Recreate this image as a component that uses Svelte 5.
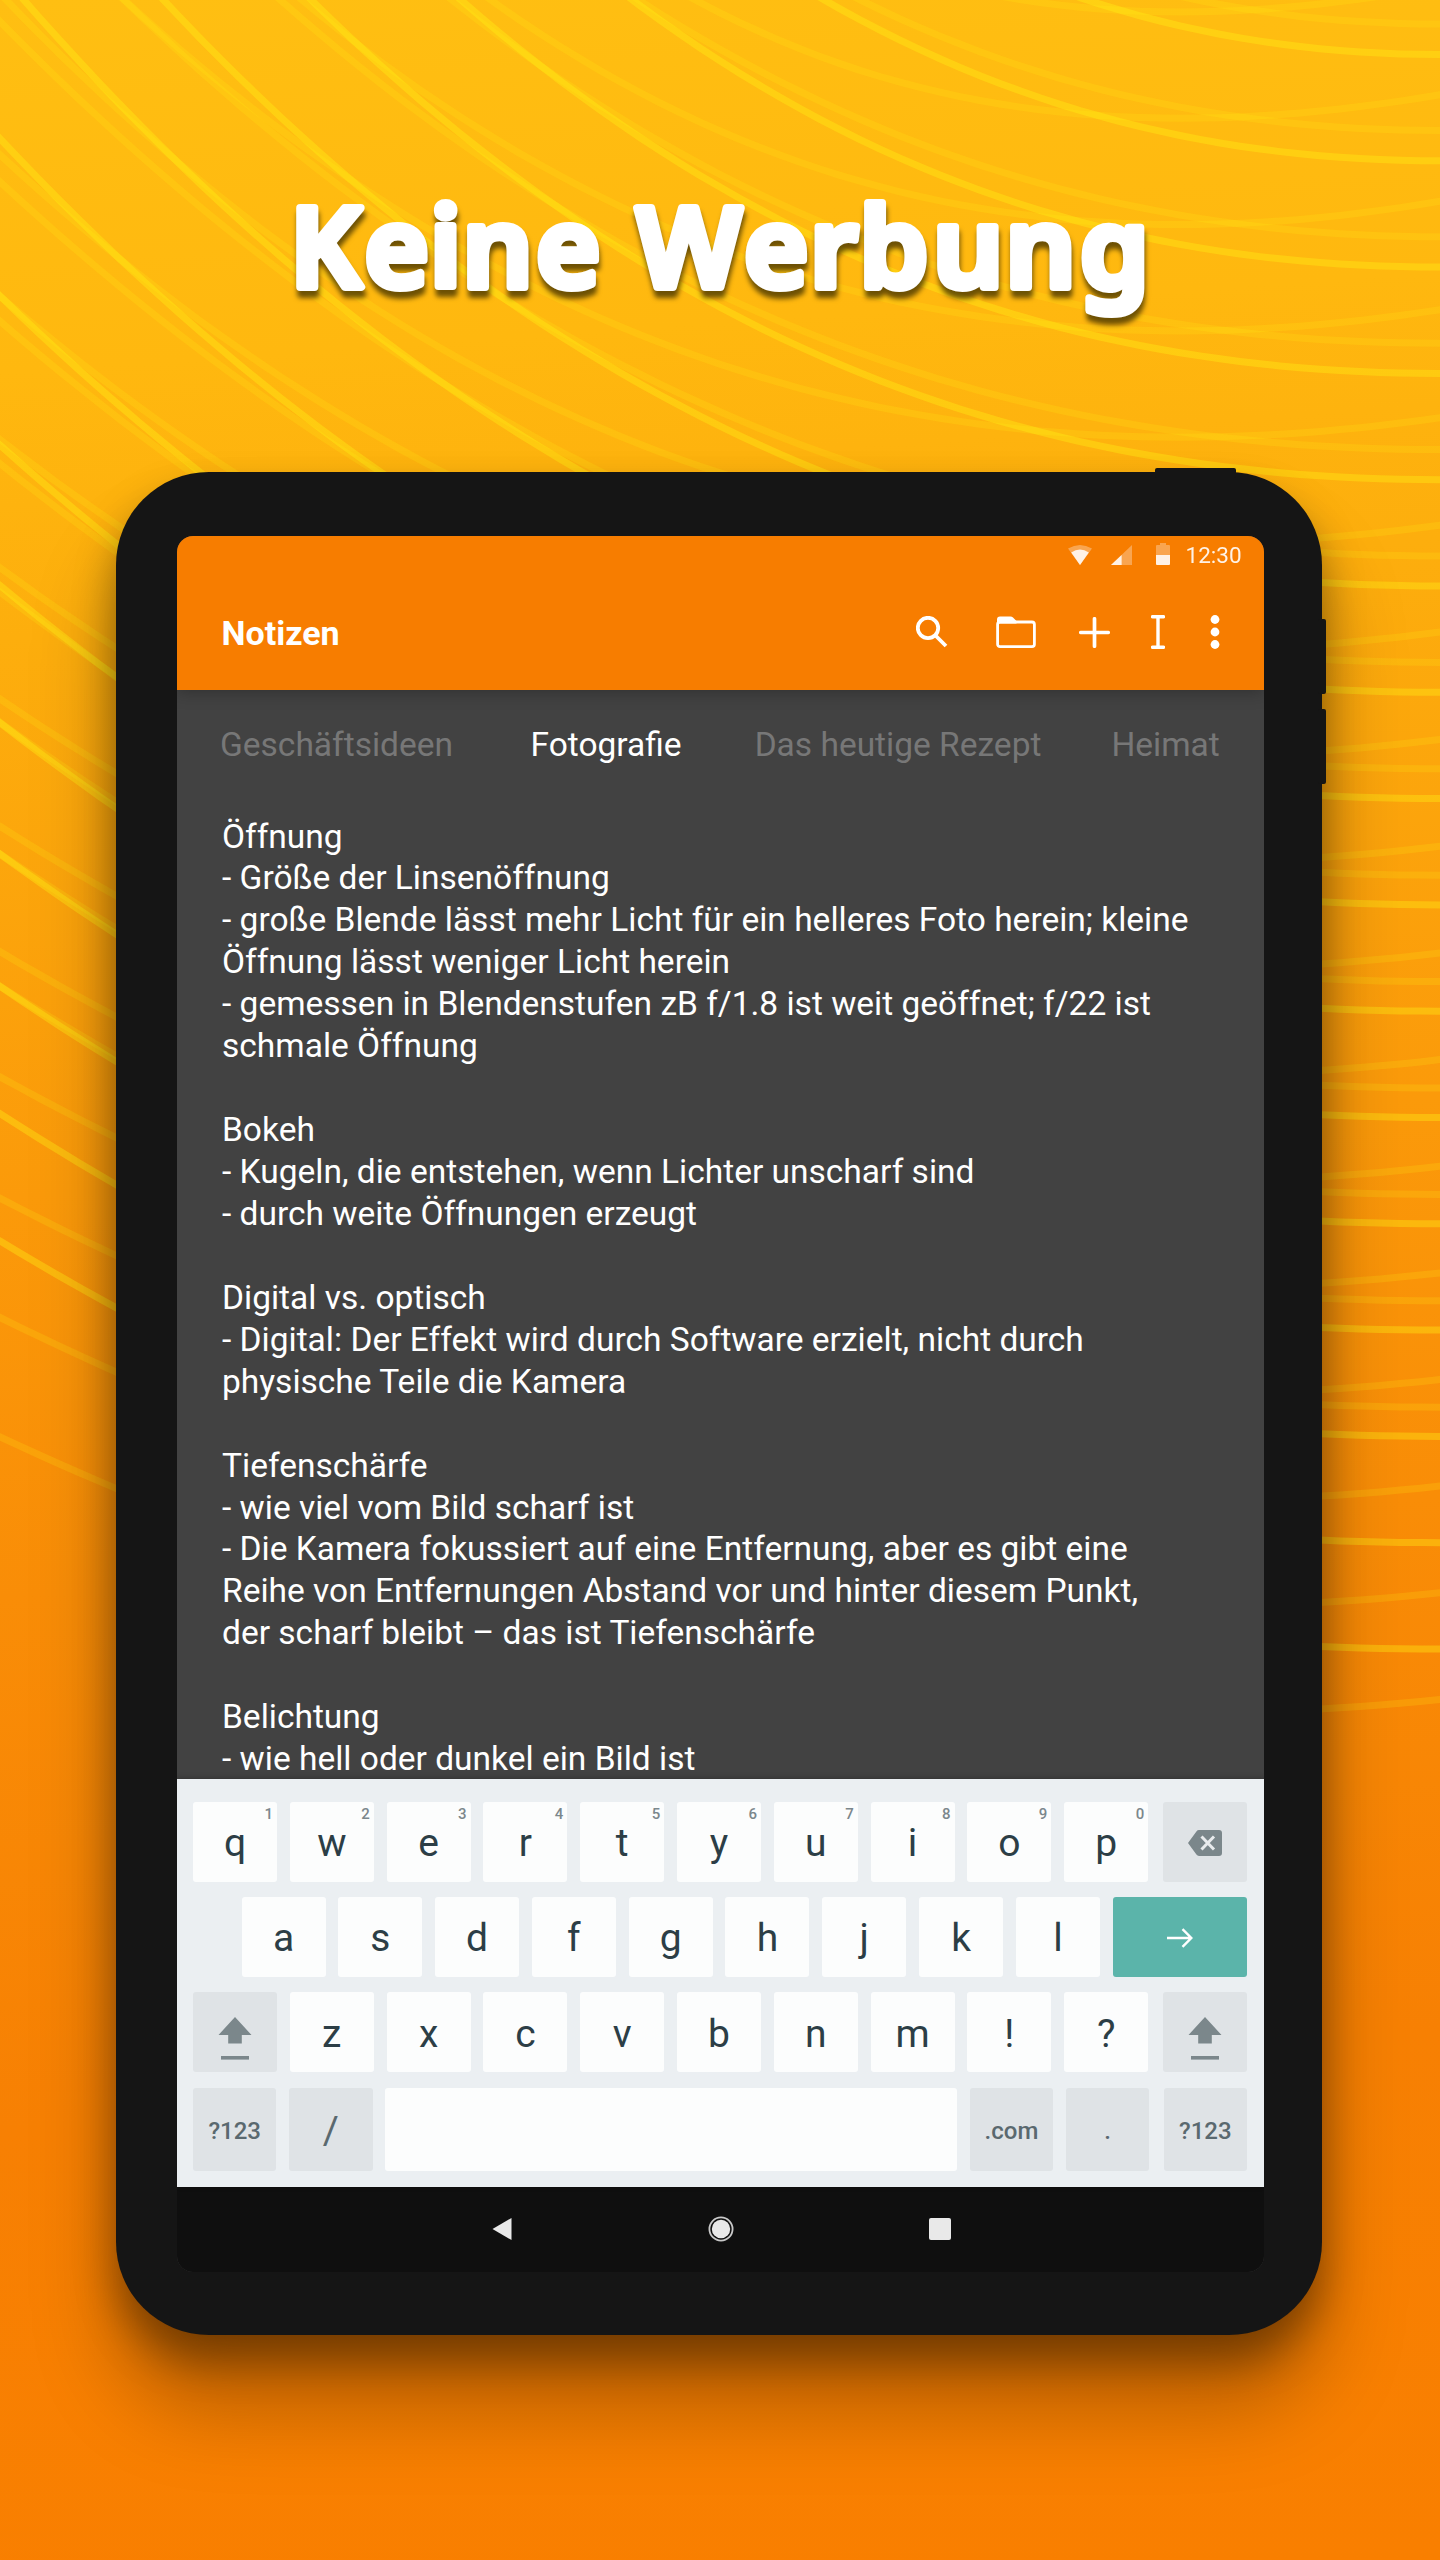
<script>
  // Each wave is y = base - a*u^2 - b*u^3, with u growing from `origin` to the left edge.
  const families = [
    {
      kind: 'strong', origin: 1440, first: 54.5, step: 106.3,
      shape: [[800, 440], [700, 420], [625, 400], [570, 350], [530, 320], [502, 275], [475, 245], [445, 215],
        [426, 183], [408, 158], [398, 134], [388, 113], [380, 96], [370, 80], [362, 67], [354, 54]]
    },
    {
      kind: 'soft', origin: 1440, first: 24, step: 106.4,
      shape: [[760, 500], [640, 410], [620, 260], [530, 290], [500, 240], [470, 214], [450, 191], [425, 162],
        [415, 139], [400, 118], [391, 105], [380, 92], [370, 77], [357, 64]]
    },
    {
      kind: 'soft', origin: 1180, first: 12, step: 106.3,
      shape: [[620, 420], [560, 344], [530, 220], [475, 165], [430, 130], [410, 140], [390, 105], [365, 95],
        [350, 73], [337, 64], [327, 49], [317, 38], [308, 28], [299, 18], [292, 10], [284, 5], [276, 0]]
    }
  ];

  const waves = families.flatMap(({ kind, origin, first, step, shape }) =>
    shape.map(([a, b], i) => {
      const points = [];
      for (let x = -20; x <= 1460; x += 20) {
        const u = (origin - x) / origin;
        points.push(`${x} ${(first + step * i - a * u * u - b * u * u * u).toFixed(1)}`);
      }
      return { kind, d: 'M' + points.join('L') };
    })
  );

  const tabs = [
    { label: 'Geschäftsideen' },
    { label: 'Fotografie', active: true },
    { label: 'Das heutige Rezept' },
    { label: 'Heimat' }
  ];

  const note = `Öffnung
- Größe der Linsenöffnung
- große Blende lässt mehr Licht für ein helleres Foto herein; kleine
Öffnung lässt weniger Licht herein
- gemessen in Blendenstufen zB f/1.8 ist weit geöffnet; f/22 ist
schmale Öffnung

Bokeh
- Kugeln, die entstehen, wenn Lichter unscharf sind
- durch weite Öffnungen erzeugt

Digital vs. optisch
- Digital: Der Effekt wird durch Software erzielt, nicht durch
physische Teile die Kamera

Tiefenschärfe
- wie viel vom Bild scharf ist
- Die Kamera fokussiert auf eine Entfernung, aber es gibt eine
Reihe von Entfernungen Abstand vor und hinter diesem Punkt,
der scharf bleibt – das ist Tiefenschärfe

Belichtung
- wie hell oder dunkel ein Bild ist`;

  const topRow = [...'qwertyuiop'];
  const homeRow = [...'asdfghjkl'];
  const lowRow = [...'zxcvbnm!?'];
</script>

{#snippet shift()}
  <div class="key mod">
    <svg class="shift" viewBox="0 0 34 44"><path d="M17 0L33.5 18H23.8V26.5H10.2V18H.5Z" /><path d="M3 39h28v3.6H3z" /></svg>
  </div>
{/snippet}

<main class="poster">
  <svg class="waves" viewBox="0 0 1440 2560" aria-hidden="true">
    {#each waves as wave}
      <path class={wave.kind} d={wave.d} />
    {/each}
  </svg>

  <svg class="headline" viewBox="0 0 1440 472" role="heading" aria-level="1">
    <text x="290 364.5 430 462.5 536 598 636.5 744 810 859.5 933 1005.5 1080" y="286.5">Keine Werbung</text>
  </svg>

  <section class="tablet">
    <i class="button power"></i>
    <i class="button volume-up"></i>
    <i class="button volume-down"></i>

    <div class="screen">
      <header>
        <div class="status">
          <svg class="wifi" viewBox="0 0 24 20"><path class="dim" d="M0 3.6Q12 -3.6 24 3.6L12 20Z" /><path d="M3.2 7.6Q12 1.6 20.8 7.6L12 20Z" /></svg>
          <svg class="signal" viewBox="0 0 21 20"><path class="dim" d="M21 0V20H0Z" /><path d="M10.6 9.9V20H0Z" /></svg>
          <svg class="battery" viewBox="0 0 14 22"><path class="dim" d="M4 0h6v2h3q1 0 1 1v9H0V3q0-1 1-1h3z" /><path d="M0 12h14v9q0 1-1 1H1q-1 0-1-1z" /></svg>
          <span>12:30</span>
        </div>
        <div class="toolbar">
          <h2>Notizen</h2>
          <svg class="search" viewBox="0 0 32 32"><circle cx="12" cy="12" r="10.2" /><path d="M19.5 19.5L30 30" /></svg>
          <svg class="folder" viewBox="0 0 40 32"><path class="solid" d="M1 8V3.5Q1 .5 4 .5H14.5Q16 .5 17 1.5L20.5 5V7.5H1Z" /><rect x="1.6" y="6" width="36.8" height="24.6" rx="2.4" /></svg>
          <svg class="plus" viewBox="0 0 31 31"><path d="M15.5 1.8V29.2M1.8 15.5H29.2" /></svg>
          <svg class="cursor" viewBox="0 0 14 34"><path d="M1.5 1.8H12.5M1.5 32.2H12.5M7 2V32" /></svg>
          <svg class="more" viewBox="0 0 10 34"><circle cx="5" cy="4.5" r="4.4" /><circle cx="5" cy="17" r="4.4" /><circle cx="5" cy="29.5" r="4.4" /></svg>
        </div>
      </header>

      <div class="body">
        <nav class="tabs">
          {#each tabs as tab}
            <span class:active={tab.active}>{tab.label}</span>
          {/each}
        </nav>
        <p class="note">{note}</p>
      </div>

      <div class="keyboard">
        <div class="row">
          {#each topRow as letter, i}
            <div class="key"><small>{(i + 1) % 10}</small><b>{letter}</b></div>
          {/each}
          <div class="key mod">
            <svg class="erase" viewBox="0 0 34 26"><path d="M11 0H31Q34 0 34 3V23Q34 26 31 26H11Q9.4 26 8.4 24.6L0 13L8.4 1.4Q9.4 0 11 0Z" /><path class="cross" d="M13.5 6.5L26 19.5M26 6.5L13.5 19.5" /></svg>
          </div>
        </div>
        <div class="row home">
          {#each homeRow as letter}
            <div class="key"><b>{letter}</b></div>
          {/each}
          <div class="key enter">
            <svg viewBox="0 0 26 20"><path d="M0 10H24M15.5 1.2L24.3 10L15.5 18.8" /></svg>
          </div>
        </div>
        <div class="row">
          {@render shift()}
          {#each lowRow as letter}
            <div class="key"><b>{letter}</b></div>
          {/each}
          {@render shift()}
        </div>
        <div class="row last">
          <div class="key mod"><em>?123</em></div>
          <div class="key mod"><b>/</b></div>
          <div class="key space"></div>
          <div class="key mod"><em>.com</em></div>
          <div class="key mod"><em>.</em></div>
          <div class="key mod"><em>?123</em></div>
        </div>
      </div>

      <footer>
        <svg class="back" viewBox="0 0 20 22"><path d="M19.5 0V22L.5 11Z" /></svg>
        <svg class="circle" viewBox="0 0 26 26"><circle class="ring" cx="13" cy="13" r="11.6" /><circle cx="13" cy="13" r="9.2" /></svg>
        <svg class="square" viewBox="0 0 22 22"><rect width="22" height="22" rx="2" /></svg>
      </footer>
    </div>
  </section>
</main>

<style>
  :global(body) {
    margin: 0;
  }

  .poster {
    position: relative;
    width: 1440px;
    height: 2560px;
    overflow: hidden;
    font-family: Roboto, 'Liberation Sans', sans-serif;
    background: linear-gradient(176deg, #ffbf12 0%, #ffb80f 14%, #fdae0d 24%, #fb9a0a 45%, #f98d07 60%, #f78003 80%, #f97f00 100%);
  }

  svg {
    display: block;
    flex: none;
  }

  .waves {
    position: absolute;
    inset: 0;
    width: 1440px;
    height: 2560px;
    fill: none;
    stroke: #fff016;
    stroke-width: 7;
  }
  .strong { opacity: 0.38; }
  .soft { opacity: 0.19; }

  .headline {
    position: relative;
    width: 1440px;
    height: 472px;
    font: 600 110px 'Noto Sans', 'Open Sans', sans-serif;
    fill: #fff;
    stroke: #fff;
    stroke-width: 8;
    stroke-linejoin: round;
    filter: drop-shadow(1px 7px 2.5px rgba(60, 45, 0, 0.75));
  }

  .tablet {
    position: relative;
    box-sizing: border-box;
    width: 1206px;
    height: 1863px;
    margin-left: 116px;
    padding: 64px 58.5px 63px 61px;
    border-radius: 93px;
    background: #151515;
    box-shadow: 0 72px 84px rgba(0, 0, 0, 0.28), 0 24px 40px rgba(0, 0, 0, 0.36);
  }

  .button {
    position: absolute;
    background: #151515;
    border-radius: 2px;
  }
  .power { left: 1039px; top: -4px; width: 81px; height: 10px; }
  .volume-up { right: -3.5px; top: 147px; width: 8px; height: 75px; }
  .volume-down { right: -3.5px; top: 237px; width: 8px; height: 75px; }

  .screen {
    display: flex;
    flex-direction: column;
    height: 1736px;
    border-radius: 16px;
    overflow: hidden;
    background: #424242;
  }

  header {
    position: relative;
    height: 153.5px;
    flex: none;
    background: #f77d00;
    color: #fff;
    box-shadow: 0 2px 16px rgba(0, 0, 0, 0.28);
  }

  .status {
    display: flex;
    align-items: flex-end;
    justify-content: flex-end;
    height: 29px;
    padding-right: 22px;
    fill: #fff;
    opacity: 0.9;
  }
  .status .dim { opacity: 0.35; }
  .status span { font-size: 22.5px; line-height: 20px; width: 56px; margin-left: 16px; }
  .wifi { width: 24px; height: 20px; }
  .signal { width: 21px; height: 20px; margin-left: 19px; }
  .battery { width: 14px; height: 22px; margin-left: 24px; }

  .toolbar {
    display: flex;
    align-items: center;
    height: 68px;
    margin-top: 33px;
    padding: 0 43.5px 0 44.5px;
    fill: none;
    stroke: #fff;
  }
  .toolbar h2 { flex: 1; margin: 0; padding-top: 1px; font-size: 34px; font-weight: 700; line-height: 40px; }
  .search { width: 32px; height: 32px; stroke-width: 3.8; }
  .folder { width: 40px; height: 32px; margin-left: 48px; stroke-width: 2.8; }
  .folder .solid { fill: #fff; stroke: none; }
  .plus { width: 31px; height: 31px; margin-left: 43px; stroke-width: 3.7; stroke-linecap: round; }
  .cursor { width: 14px; height: 34px; margin-left: 41px; stroke-width: 3.4; stroke-linecap: round; }
  .more { width: 10px; height: 34px; margin-left: 45px; fill: #fff; stroke: none; }

  .body {
    height: 1089.5px;
    flex: none;
    overflow: hidden;
    color: #fff;
    font-size: 33.5px;
  }

  .tabs {
    display: flex;
    margin: 35px 0 0 43px;
    line-height: 40px;
    color: #777;
    white-space: nowrap;
  }
  .tabs span:nth-child(2) { margin-left: 77.5px; }
  .tabs span:nth-child(3) { margin-left: 73px; }
  .tabs span:nth-child(4) { margin-left: 70px; }
  .tabs .active { color: #fff; }

  .note {
    margin: 51px 0 0 45px;
    line-height: 41.93px;
    white-space: pre;
  }

  .keyboard {
    position: relative;
    box-sizing: border-box;
    display: flex;
    flex-direction: column;
    gap: 15.7px;
    height: 408px;
    flex: none;
    padding: 23px 16.5px 0 16px;
    background: #ebeff2;
    color: #2c3e46;
    box-shadow: 0 -1px 5px rgba(0, 0, 0, 0.25);
  }

  .row {
    display: flex;
    gap: 12.8px;
    height: 79.5px;
  }
  .row .key:last-child { margin-left: auto; }
  .home { padding-left: 48.5px; }
  .last { height: 83.5px; }
  .last .key { width: 83.4px; }
  .last .key:last-child { margin-left: 1.5px; }
  .last .key.space { width: auto; }

  .key {
    position: relative;
    box-sizing: border-box;
    display: flex;
    align-items: center;
    justify-content: center;
    width: 84px;
    flex: none;
    padding-top: 3px;
    border-radius: 3px;
    background: #fcfdfd;
  }
  .key b { font-weight: 400; font-size: 39px; line-height: 46px; }
  .key em { font-style: normal; font-weight: 500; font-size: 24px; line-height: 28px; }
  .key small {
    position: absolute;
    top: 3px;
    right: 4px;
    font-size: 15px;
    line-height: 18px;
    font-weight: 500;
    color: #7b878c;
  }
  .mod { background: #dfe3e6; color: #5a696f; fill: #7b878b; }
  .space { flex: 1; }
  .enter { flex: 1; background: #5bb4aa; }
  .enter svg { width: 26px; height: 20px; fill: none; stroke: #fff; stroke-width: 2.4; }
  .erase { width: 34px; height: 26px; margin-top: -1px; }
  .erase .cross { fill: none; stroke: #e8ebed; stroke-width: 3; }
  .shift { width: 34px; height: 44px; margin-top: 11px; }

  footer {
    display: flex;
    align-items: center;
    justify-content: center;
    height: 85px;
    flex: none;
    padding: 0 0 1px 3px;
    box-sizing: border-box;
    background: #0f0f0f;
    fill: #e9e9e9;
  }
  .back { width: 20px; height: 22px; }
  .circle { width: 26px; height: 26px; margin: 0 195px 0 196px; }
  .circle .ring { fill: none; stroke: #c9c9c9; stroke-width: 1.8; }
  .square { width: 22px; height: 22px; }
</style>
